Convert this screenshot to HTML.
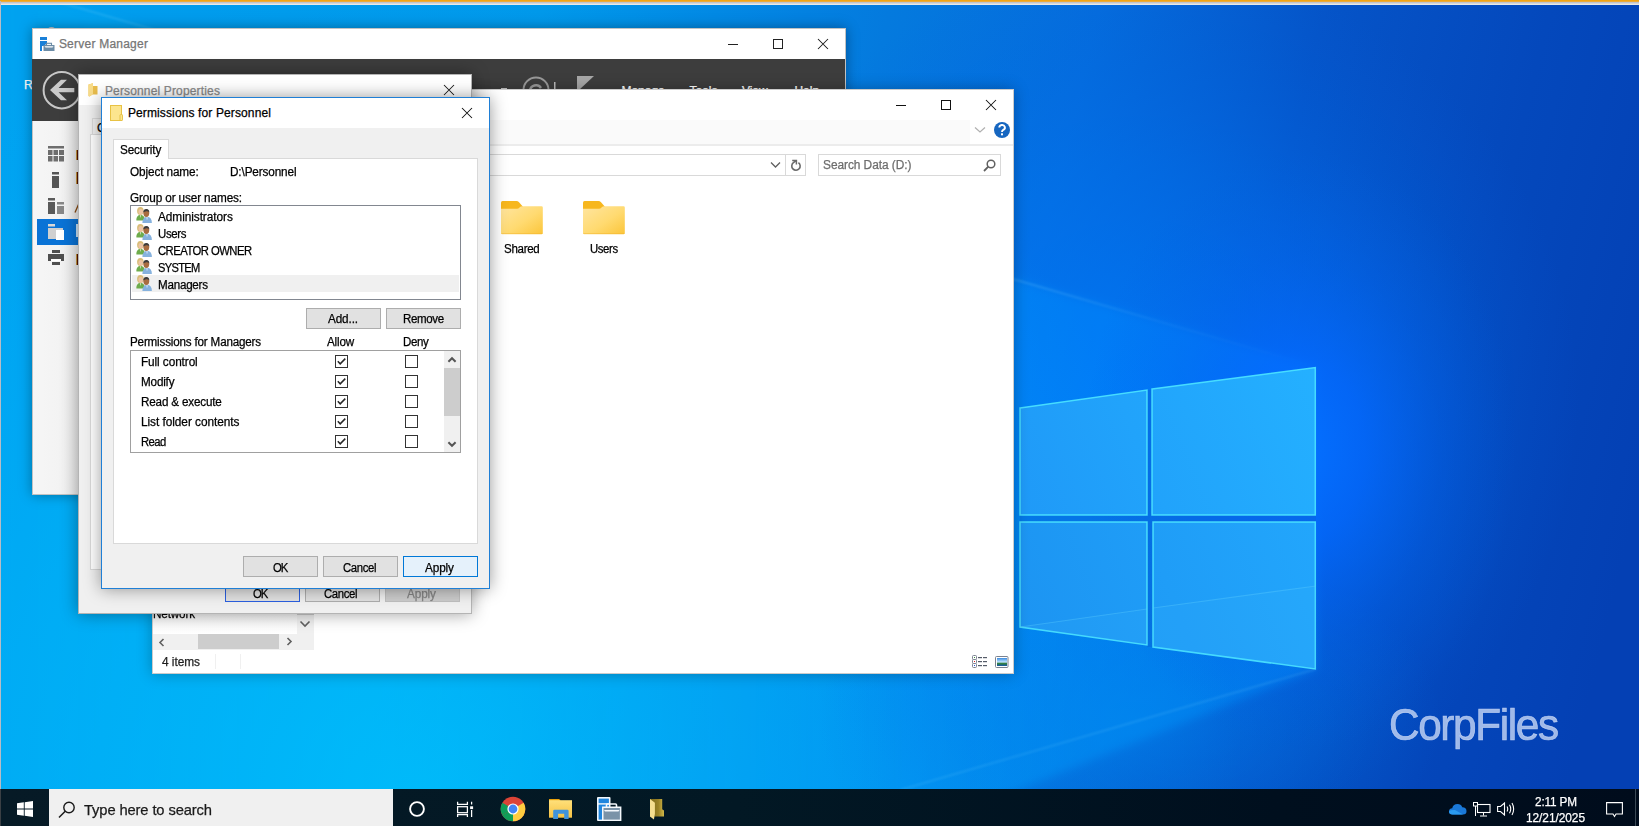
<!DOCTYPE html>
<html><head><meta charset="utf-8"><title>Desktop</title>
<style>
html,body{margin:0;padding:0;width:1639px;height:826px;overflow:hidden;background:#0070d0}
.a{position:absolute;display:block}
.t{position:absolute;white-space:nowrap;line-height:1;font-family:"Liberation Sans",sans-serif;-webkit-text-stroke:0.25px currentColor}
</style></head><body>
<svg class="a" style="left:0;top:0" width="1639" height="826" viewBox="0 0 1639 826">
<defs>
<linearGradient id="bg" x1="0" y1="100" x2="1639" y2="500" gradientUnits="userSpaceOnUse">
<stop offset="0" stop-color="#009eee"/>
<stop offset="0.3" stop-color="#0098ea"/>
<stop offset="0.5" stop-color="#047ade"/>
<stop offset="0.62" stop-color="#056cdc"/>
<stop offset="0.75" stop-color="#0554c8"/>
<stop offset="0.88" stop-color="#0448bc"/>
<stop offset="1" stop-color="#0440b4"/>
</linearGradient>
<radialGradient id="glow" cx="1300" cy="450" r="240" gradientUnits="userSpaceOnUse" gradientTransform="translate(1300 450) scale(0.9 1.25) translate(-1300 -450)">
<stop offset="0" stop-color="#0470ff" stop-opacity="1"/>
<stop offset="0.3" stop-color="#0468ff" stop-opacity="0.75"/>
<stop offset="0.65" stop-color="#0462f0" stop-opacity="0.3"/>
<stop offset="1" stop-color="#0460e0" stop-opacity="0"/>
</radialGradient>
<linearGradient id="beam" x1="1316" y1="0" x2="0" y2="0" gradientUnits="userSpaceOnUse">
<stop offset="0" stop-color="#0098ff" stop-opacity="0.65"/>
<stop offset="0.25" stop-color="#00a0ff" stop-opacity="0.5"/>
<stop offset="0.6" stop-color="#00b0ff" stop-opacity="0.25"/>
<stop offset="1" stop-color="#00c0ff" stop-opacity="0.12"/>
</linearGradient>
<linearGradient id="paneT" x1="1020" y1="500" x2="1316" y2="380" gradientUnits="userSpaceOnUse">
<stop offset="0" stop-color="#1f9af8"/>
<stop offset="1" stop-color="#24b0ff"/>
</linearGradient>
<linearGradient id="paneB" x1="1020" y1="640" x2="1316" y2="530" gradientUnits="userSpaceOnUse">
<stop offset="0" stop-color="#1c94f2"/>
<stop offset="1" stop-color="#22a6fc"/>
</linearGradient>
<radialGradient id="cy" cx="420" cy="800" r="820" gradientUnits="userSpaceOnUse">
<stop offset="0" stop-color="#00c8ff" stop-opacity="0.7"/>
<stop offset="0.5" stop-color="#00c0ff" stop-opacity="0.38"/>
<stop offset="1" stop-color="#00b0ff" stop-opacity="0"/>
</radialGradient>
<radialGradient id="glow2" cx="1140" cy="400" r="440" gradientUnits="userSpaceOnUse">
<stop offset="0" stop-color="#007cfc" stop-opacity="0.85"/>
<stop offset="0.55" stop-color="#0074f4" stop-opacity="0.38"/>
<stop offset="1" stop-color="#0060e0" stop-opacity="0"/>
</radialGradient>
<radialGradient id="floorg" cx="1130" cy="720" r="260" gradientUnits="userSpaceOnUse" gradientTransform="translate(1130 720) scale(1.2 0.7) translate(-1130 -720)">
<stop offset="0" stop-color="#0088f0" stop-opacity="0.55"/>
<stop offset="0.6" stop-color="#0080ec" stop-opacity="0.25"/>
<stop offset="1" stop-color="#0078e8" stop-opacity="0"/>
</radialGradient>
<linearGradient id="edgeg" x1="1316" y1="367" x2="0" y2="-15" gradientUnits="userSpaceOnUse">
<stop offset="0" stop-color="#7fd8ff" stop-opacity="0"/>
<stop offset="0.12" stop-color="#7fd8ff" stop-opacity="0.1"/>
<stop offset="0.25" stop-color="#7fd8ff" stop-opacity="0.35"/>
<stop offset="1" stop-color="#7fd8ff" stop-opacity="0.25"/>
</linearGradient>
<filter id="bl" x="-10%" y="-10%" width="120%" height="120%"><feGaussianBlur stdDeviation="5"/></filter>
<filter id="bl2"><feGaussianBlur stdDeviation="1.2"/></filter>
</defs>
<rect width="1639" height="826" fill="url(#bg)"/>
<polygon points="1316,367 -20,-20 -20,846 880,846 1316,669" fill="url(#beam)" filter="url(#bl)"/>
<rect width="1639" height="826" fill="url(#glow2)"/>
<rect width="1639" height="826" fill="url(#cy)"/>
<rect width="1639" height="826" fill="url(#floorg)"/>
<rect width="1639" height="826" fill="url(#glow)"/>
<path d="M1316 367 L0 -15" stroke="url(#edgeg)" stroke-width="1.5" filter="url(#bl2)"/>
<path d="M1316 669 L900 790" stroke="#7fd8ff" stroke-opacity="0.2" stroke-width="1.5" filter="url(#bl2)"/>
<path d="M1020 515 H1316 V522 H1020 Z M1147 390 H1153 V647 H1147 Z" fill="#0a62d4" opacity="0.4"/>
<g stroke="#50eaff" stroke-width="1.5" stroke-opacity="0.85">
<polygon points="1020,408 1147,390 1147,515 1020,515" fill="url(#paneT)"/>
<polygon points="1152,389 1315.3,367.5 1315.3,515 1152,515" fill="url(#paneT)"/>
<polygon points="1020,522 1147,522 1147,645 1020,627" fill="url(#paneB)"/>
<polygon points="1153,522 1315.3,522 1315.3,669 1153,647" fill="url(#paneB)"/>
</g>
<path d="M1020 627 L1147 609 L1147 645 Z M1153 608 L1316 586 L1316 669 L1153 647 Z" fill="#40c0ff" opacity="0.12"/>
<path d="M1020 627 L1147 609 M1153 608 L1316 586" stroke="#60d0ff" stroke-opacity="0.35" stroke-width="1.2"/>
</svg>
<div class="a" style="left:0px;top:0px;width:1639px;height:2px;background:linear-gradient(#f5a000,#e8b050)"></div>
<div class="a" style="left:0px;top:2px;width:1639px;height:3px;background:linear-gradient(#b8bcc6,#f4f2ec)"></div>
<div class="a" style="left:0px;top:1px;width:1px;height:825px;background:#b8bcc6"></div>
<div class="t" style="left:23.90px;top:78.84px;font-size:12px;color:#ffffff;">R</div>
<div class="a" style="left:48px;top:27px;width:7px;height:3px;background:#b4c4d0;border-radius:3px 3px 0 0"></div>
<div class="a" style="left:32px;top:28px;width:814px;height:467px;background:#ffffff;box-shadow:0 0 12px rgba(0,0,0,0.35);border:1px solid rgba(120,120,120,0.45);box-sizing:border-box"></div>
<svg class="a" style="left:39px;top:36px;" width="16" height="16" viewBox="0 0 16 16"><rect x="1" y="1" width="7" height="3" fill="#1a80d8"/><path d="M1 5 H8 V7 L5 10 L3 10 L3 15 H1 Z" fill="#1a80d8"/><rect x="4.5" y="9" width="11" height="6" fill="#6c8ca6"/><rect x="7.5" y="7.3" width="5" height="2.2" fill="none" stroke="#6c8ca6" stroke-width="1.1"/><path d="M5.5 10.2 H14.5 L13.5 11.6 H6.5 Z" fill="#ffffff"/></svg>
<div class="t" style="left:58.90px;top:38.34px;font-size:12px;color:#767676;letter-spacing:0.228px;">Server Manager</div>
<div class="a" style="left:728px;top:44px;width:10px;height:1px;background:#222"></div>
<div class="a" style="left:773px;top:39px;width:10px;height:10px;border:1px solid #222;box-sizing:border-box"></div>
<svg class="a" style="left:817px;top:38px;" width="12" height="12" viewBox="0 0 12 12"><path d="M1 1 L11 11 M11 1 L1 11" stroke="#1a1a1a" stroke-width="1.05"/></svg>
<div class="a" style="left:32px;top:59px;width:813px;height:62px;background:#3d3d3d"></div>
<svg class="a" style="left:41px;top:70px;" width="40" height="40" viewBox="0 0 40 40"><circle cx="20.8" cy="20.2" r="18.2" fill="none" stroke="#c8c8c8" stroke-width="2"/><path d="M9 20 L20 9.8 H26 L17.6 17.9 H33.3 V22.3 H17.6 L26 30.3 H20 Z" fill="#cbcbcb"/></svg>
<svg class="a" style="left:498px;top:74px;" width="100" height="20" viewBox="0 0 100 20"><rect x="3" y="14" width="6" height="1.6" fill="#c8c8c8"/><circle cx="38" cy="16" r="12.5" fill="none" stroke="#9a9a9a" stroke-width="2"/><path d="M32 17 a6 6 0 0 1 11 -3" stroke="#9a9a9a" stroke-width="2.4" fill="none"/><rect x="56" y="8" width="1.5" height="12" fill="#bbb"/><path d="M79 2 L96 2 L81 16 Z" fill="#a8a8a8"/><rect x="79" y="2" width="2" height="18" fill="#a8a8a8"/></svg>
<div class="t" style="left:621.40px;top:84.84px;font-size:12px;color:#ffffff;">Manage</div>
<div class="t" style="left:689.40px;top:84.84px;font-size:12px;color:#ffffff;">Tools</div>
<div class="t" style="left:741.90px;top:84.84px;font-size:12px;color:#ffffff;">View</div>
<div class="t" style="left:794.40px;top:84.84px;font-size:12px;color:#ffffff;">Help</div>
<div class="a" style="left:33px;top:121px;width:46px;height:373px;background:linear-gradient(90deg,#f6f6f6 0%,#f3f3f3 60%,#ececec 100%)"></div>
<div class="a" style="left:37px;top:219px;width:42px;height:26px;background:#0a73d6"></div>
<svg class="a" style="left:48px;top:146px;" width="18" height="120" viewBox="0 0 18 120"><g fill="#6e6e6e"><rect x="0" y="0" width="16" height="2.5"/><rect x="0" y="4" width="4.5" height="5"/><rect x="5.5" y="4" width="4.5" height="5"/><rect x="11" y="4" width="5" height="5"/><rect x="0" y="10" width="4.5" height="5.5"/><rect x="5.5" y="10" width="4.5" height="5.5"/><rect x="11" y="10" width="5" height="5.5"/></g><g fill="#555"><rect x="4" y="26" width="7" height="2.5"/><rect x="4" y="30" width="7" height="12"/></g><g fill="#5a5a5a"><rect x="0" y="52" width="7" height="2.5"/><rect x="0" y="56" width="7" height="12"/><rect x="9" y="56" width="7" height="2.5" fill="#888"/><rect x="9" y="60" width="7" height="8" fill="#888"/></g><g><rect x="0" y="78" width="7" height="2.5" fill="#d8d8d8"/><rect x="0" y="82" width="15" height="11" fill="#d0d0d0"/><rect x="8" y="84" width="8" height="10" fill="#ffffff"/></g><g fill="#505050"><rect x="4" y="104" width="8" height="3"/><rect x="0" y="108" width="16" height="7"/><rect x="3" y="113" width="10" height="2" fill="#fff"/><rect x="4" y="116" width="8" height="3"/></g></svg>
<div class="a" style="left:76px;top:150px;width:2px;height:10px;background:linear-gradient(90deg,#c89a40 0,#c89a40 35%,#5a1400 35%,#5a1400 100%)"></div>
<div class="a" style="left:76px;top:172px;width:2px;height:12px;background:linear-gradient(90deg,#c89a40 0,#c89a40 35%,#5a1400 35%,#5a1400 100%)"></div>
<div class="a" style="left:76px;top:254px;width:2px;height:11px;background:linear-gradient(90deg,#c89a40 0,#c89a40 35%,#5a1400 35%,#5a1400 100%)"></div>
<svg class="a" style="left:74px;top:204px;" width="5" height="9" viewBox="0 0 5 9"><path d="M4.5 0.5 L1 8.5" stroke="#8a4a10" stroke-width="1.3"/></svg>
<div class="a" style="left:76px;top:224px;width:2px;height:13px;background:#cfe6f8"></div>
<div class="a" style="left:152px;top:89px;width:862px;height:585px;background:#ffffff;box-shadow:0 0 14px rgba(0,0,0,0.28);border:1px solid rgba(140,140,140,0.45);box-sizing:border-box"></div>
<div class="a" style="left:896px;top:105px;width:10px;height:1px;background:#111"></div>
<div class="a" style="left:941px;top:100px;width:10px;height:10px;border:1px solid #111;box-sizing:border-box"></div>
<svg class="a" style="left:985px;top:99px;" width="12" height="12" viewBox="0 0 12 12"><path d="M1 1 L11 11 M11 1 L1 11" stroke="#111" stroke-width="1.05"/></svg>
<div class="a" style="left:152px;top:120px;width:818px;height:24px;background:#fafafa"></div>
<div class="a" style="left:153px;top:144px;width:860px;height:2px;background:#ececec"></div>
<svg class="a" style="left:974px;top:126px;" width="12" height="8" viewBox="0 0 12 8"><path d="M1 1.5 L6 6 L11 1.5" stroke="#b0b0b0" stroke-width="1.2" fill="none"/></svg>
<svg class="a" style="left:993px;top:121px;" width="18" height="18" viewBox="0 0 18 18"><circle cx="9" cy="9" r="8" fill="#1666c0"/><path d="M6.3 6.6 a2.8 2.6 0 1 1 4 2.3 c-1 .6 -1.3 1 -1.3 2" stroke="#fff" stroke-width="1.9" fill="none"/><rect x="8" y="12.3" width="2" height="2" fill="#fff"/></svg>
<div class="a" style="left:300px;top:154px;width:506px;height:22px;border:1px solid #d9d9d9;box-sizing:border-box;background:#fff"></div>
<div class="a" style="left:785px;top:155px;width:1px;height:20px;background:#d9d9d9"></div>
<svg class="a" style="left:770px;top:161px;" width="12" height="8" viewBox="0 0 12 8"><path d="M1 1.5 L5.5 6 L10 1.5" stroke="#606060" stroke-width="1.3" fill="none"/></svg>
<svg class="a" style="left:789px;top:158px;" width="14" height="14" viewBox="0 0 14 14"><path d="M9.4 4.6 A4.2 4.2 0 1 1 4.4 4.7 L7.2 2.6" stroke="#6a6a6a" stroke-width="1.6" fill="none"/><path d="M3.2 2.4 H7.4 V6.6" stroke="#6a6a6a" stroke-width="1.5" fill="none"/></svg>
<div class="a" style="left:818px;top:154px;width:183px;height:22px;border:1px solid #d9d9d9;box-sizing:border-box;background:#fff"></div>
<div class="t" style="left:822.90px;top:159.34px;font-size:12px;color:#6d6d6d;letter-spacing:-0.054px;transform:scaleX(0.9910);transform-origin:0 0;">Search Data (D:)</div>
<svg class="a" style="left:983px;top:159px;" width="13" height="13" viewBox="0 0 13 13"><circle cx="8" cy="5" r="3.8" fill="none" stroke="#606060" stroke-width="1.5"/><path d="M5.3 7.7 L1 12" stroke="#606060" stroke-width="1.8"/></svg>
<svg class="a" style="left:501px;top:201px;" width="43" height="35" viewBox="0 0 43 35"><defs><linearGradient id="fg501" x1="0" y1="0" x2="1" y2="1"><stop offset="0" stop-color="#ffe5a0"/><stop offset="0.55" stop-color="#ffda70"/><stop offset="1" stop-color="#fbc53a"/></linearGradient></defs><path d="M1.5 0 H15.5 Q16.8 0 17.8 1 L21.5 5.2 V10 H0 V1.5 Q0 0 1.5 0 Z" fill="#f7b71e"/><path d="M0 7.7 H16 Q17.5 7.7 18.5 6.5 L19.3 5.7 Q19.9 5.2 21 5.2 H40.5 Q41.8 5.2 41.8 6.5 V32 Q41.8 33.3 40.5 33.3 H1.3 Q0 33.3 0 32 Z" fill="url(#fg501)"/><path d="M0.3 32.4 H41.5" stroke="#f2b42c" stroke-width="0.8" opacity="0.6"/></svg>
<svg class="a" style="left:583px;top:201px;" width="43" height="35" viewBox="0 0 43 35"><defs><linearGradient id="fg583" x1="0" y1="0" x2="1" y2="1"><stop offset="0" stop-color="#ffe5a0"/><stop offset="0.55" stop-color="#ffda70"/><stop offset="1" stop-color="#fbc53a"/></linearGradient></defs><path d="M1.5 0 H15.5 Q16.8 0 17.8 1 L21.5 5.2 V10 H0 V1.5 Q0 0 1.5 0 Z" fill="#f7b71e"/><path d="M0 7.7 H16 Q17.5 7.7 18.5 6.5 L19.3 5.7 Q19.9 5.2 21 5.2 H40.5 Q41.8 5.2 41.8 6.5 V32 Q41.8 33.3 40.5 33.3 H1.3 Q0 33.3 0 32 Z" fill="url(#fg583)"/><path d="M0.3 32.4 H41.5" stroke="#f2b42c" stroke-width="0.8" opacity="0.6"/></svg>
<div class="t" style="left:504.40px;top:243.34px;font-size:12px;color:#000;letter-spacing:-0.299px;transform:scaleX(0.9614);transform-origin:0 0;">Shared</div>
<div class="t" style="left:590.20px;top:243.34px;font-size:12px;color:#000;letter-spacing:-0.418px;transform:scaleX(0.9467);transform-origin:0 0;">Users</div>
<div class="a" style="left:153px;top:613px;width:144px;height:20px;background:linear-gradient(#f4f4f4,#ffffff)"></div>
<div class="t" style="left:152.80px;top:607.84px;font-size:12px;color:#000;letter-spacing:-0.168px;transform:scaleX(0.9771);transform-origin:0 0;">Network</div>
<div class="a" style="left:297px;top:613px;width:17px;height:37px;background:#f0f0f0"></div>
<div class="a" style="left:297px;top:613px;width:17px;height:2px;background:#c8c8c8"></div>
<svg class="a" style="left:299px;top:620px;" width="12" height="8" viewBox="0 0 12 8"><path d="M1.5 1.5 L6 6 L10.5 1.5" stroke="#606060" stroke-width="1.6" fill="none"/></svg>
<div class="a" style="left:153px;top:634px;width:144px;height:16px;background:#f0f0f0"></div>
<div class="a" style="left:198px;top:634px;width:81px;height:15px;background:#cdcdcd"></div>
<svg class="a" style="left:157px;top:637px;" width="10" height="10" viewBox="0 0 10 10"><path d="M6.5 2 L3 5.5 L6.5 9" stroke="#606060" stroke-width="1.6" fill="none"/></svg>
<svg class="a" style="left:284px;top:636px;" width="10" height="10" viewBox="0 0 10 10"><path d="M3.5 2 L7 5.5 L3.5 9" stroke="#606060" stroke-width="1.6" fill="none"/></svg>
<div class="t" style="left:162.40px;top:656.34px;font-size:12px;color:#1e1e1e;letter-spacing:-0.056px;transform:scaleX(0.9913);transform-origin:0 0;">4 items</div>
<div class="a" style="left:215px;top:654px;width:1px;height:15px;background:#f0f0f0"></div>
<div class="a" style="left:240px;top:654px;width:1px;height:15px;background:#f0f0f0"></div>
<svg class="a" style="left:972px;top:655px;" width="16" height="13" viewBox="0 0 16 13"><g fill="#fff" stroke="#7a8290" stroke-width="1"><rect x="0.5" y="0.5" width="4" height="4" rx="1"/><rect x="0.5" y="4.5" width="4" height="4" rx="1"/><rect x="0.5" y="8.5" width="4" height="4" rx="1"/></g><g fill="#555c68"><rect x="6" y="2" width="4" height="1.2"/><rect x="11" y="2" width="4" height="1.2"/><rect x="6" y="6" width="4" height="1.2"/><rect x="11" y="6" width="4" height="1.2"/><rect x="6" y="10" width="4" height="1.2"/><rect x="11" y="10" width="4" height="1.2"/></g><rect x="2" y="2" width="1" height="1" fill="#3a8a3a"/><rect x="2" y="6" width="1" height="1" fill="#e02020"/><rect x="2" y="10" width="1" height="1" fill="#2050e0"/></svg>
<svg class="a" style="left:995px;top:656px;" width="14" height="12" viewBox="0 0 14 12"><defs><linearGradient id="pic" x1="0" y1="0" x2="0" y2="1"><stop offset="0" stop-color="#3a8ae0"/><stop offset="0.5" stop-color="#bfe4ff"/><stop offset="0.7" stop-color="#2a7a3a"/><stop offset="1" stop-color="#1a5ab0"/></linearGradient></defs><rect x="0.5" y="0.5" width="12.5" height="11" rx="1" fill="#fff" stroke="#7a8290"/><rect x="2" y="2" width="10" height="8" fill="url(#pic)"/></svg>
<div class="a" style="left:78px;top:74px;width:394px;height:540px;background:#f0f0f0;box-shadow:0 0 16px rgba(0,0,0,0.38);border:1px solid rgba(140,140,140,0.6);box-sizing:border-box"></div>
<div class="a" style="left:79px;top:75px;width:392px;height:30px;background:#ffffff"></div>
<svg class="a" style="left:88px;top:83px;" width="11" height="14" viewBox="0 0 11 14"><path d="M0.5 1.5 L5 0.3 V3 H9.5 V11.5 H4 L1.5 13.5 L0.5 13 Z" fill="#e9bd4c"/><path d="M0.5 1.5 L5 0.3 V11.5 L1.5 13.5 L0.5 13 Z" fill="#f8dc8a"/></svg>
<div class="t" style="left:104.90px;top:84.84px;font-size:12px;color:#8a8a8a;letter-spacing:0.155px;">Personnel Properties</div>
<svg class="a" style="left:443px;top:84px;" width="12" height="12" viewBox="0 0 12 12"><path d="M1 1 L11 11 M11 1 L1 11" stroke="#1a1a1a" stroke-width="1.05"/></svg>
<div class="a" style="left:92px;top:118px;width:12px;height:17px;background:#f0f0f0;border:1px solid #d9d9d9;border-bottom:none;box-sizing:border-box"></div>
<div class="a" style="left:90px;top:134px;width:380px;height:1px;background:#d9d9d9"></div>
<div class="t" style="left:96.90px;top:121.84px;font-size:12px;color:#000;">General</div>
<div class="a" style="left:90px;top:135px;width:12px;height:434px;background:#ffffff;border-left:1px solid #d9d9d9;box-sizing:border-box"></div>
<div class="a" style="left:90px;top:569px;width:380px;height:1px;background:#d9d9d9"></div>
<div class="a" style="left:225px;top:582px;width:75px;height:20px;background:#e1e1e1;border:1px solid #2a5fe0;box-sizing:border-box"></div>
<div class="t" style="left:253.40px;top:587.64px;font-size:12px;color:#000;letter-spacing:-1.014px;transform:scaleX(0.9415);transform-origin:0 0;">OK</div>
<div class="a" style="left:305px;top:582px;width:75px;height:20px;background:#e1e1e1;border:1px solid #adadad;box-sizing:border-box"></div>
<div class="t" style="left:324.40px;top:587.64px;font-size:12px;color:#000;letter-spacing:-0.406px;transform:scaleX(0.9457);transform-origin:0 0;">Cancel</div>
<div class="a" style="left:385px;top:582px;width:75px;height:20px;background:#cccccc;border:1px solid #bfbfbf;box-sizing:border-box"></div>
<div class="t" style="left:407.40px;top:587.64px;font-size:12px;color:#838383;letter-spacing:-0.139px;transform:scaleX(0.9814);transform-origin:0 0;">Apply</div>
<div class="a" style="left:101px;top:97px;width:389px;height:492px;background:#f0f0f0;border:1px solid #1f7fd6;box-sizing:border-box;box-shadow:0 0 16px rgba(0,0,0,0.4)"></div>
<div class="a" style="left:102px;top:98px;width:387px;height:30px;background:#ffffff"></div>
<svg class="a" style="left:110px;top:105px;" width="13" height="16" viewBox="0 0 13 16"><rect x="0.5" y="0.5" width="11" height="15" fill="#fce58e" stroke="#e8c244"/><rect x="10" y="9.6" width="2.5" height="5.9" rx="0.6" fill="#fce58e" stroke="#e4be40" stroke-width="0.9"/></svg>
<div class="t" style="left:127.90px;top:107.34px;font-size:12px;color:#000;letter-spacing:0.123px;">Permissions for Personnel</div>
<svg class="a" style="left:461px;top:107px;" width="12" height="12" viewBox="0 0 12 12"><path d="M1 1 L11 11 M11 1 L1 11" stroke="#111" stroke-width="1.05"/></svg>
<div class="a" style="left:113px;top:158px;width:365px;height:386px;background:#ffffff;border:1px solid #d9d9d9;box-sizing:border-box"></div>
<div class="a" style="left:113px;top:139px;width:56px;height:20px;background:#ffffff;border:1px solid #d9d9d9;border-bottom:none;box-sizing:border-box"></div>
<div class="t" style="left:120.40px;top:143.84px;font-size:12px;color:#000;letter-spacing:-0.153px;transform:scaleX(0.9753);transform-origin:0 0;">Security</div>
<div class="t" style="left:130.20px;top:165.54px;font-size:12px;color:#000;letter-spacing:-0.120px;transform:scaleX(0.9815);transform-origin:0 0;">Object name:</div>
<div class="t" style="left:229.70px;top:165.54px;font-size:12px;color:#000;letter-spacing:-0.130px;transform:scaleX(0.9794);transform-origin:0 0;">D:\Personnel</div>
<div class="t" style="left:130.20px;top:192.44px;font-size:12px;color:#000;letter-spacing:-0.123px;transform:scaleX(0.9799);transform-origin:0 0;">Group or user names:</div>
<div class="a" style="left:130px;top:205px;width:331px;height:95px;background:#ffffff;border:1px solid #828790;box-sizing:border-box"></div>
<div class="a" style="left:132px;top:275px;width:327px;height:17px;background:#f0f0f0"></div>
<svg class="a" style="left:136px;top:207px;" width="17" height="16" viewBox="0 0 17 16"><g><path d="M0.3 13.3 Q0.3 8.3 4.3 7.8 Q8.6 8.2 8.8 12.5 L8.8 13.6 L0.6 13.6 Z" fill="#6eac4c"/><path d="M3.8 8.3 L4.4 11 L5 8.3 Z" fill="#e8f0e0"/><ellipse cx="4.4" cy="4" rx="3.3" ry="3.9" fill="#d9bd78"/><ellipse cx="4.8" cy="4.7" rx="2.3" ry="2.8" fill="#ecc4a4"/><path d="M6.4 16 Q6.4 10.2 11.2 9.7 Q15.9 10.2 15.9 16 Z" fill="#86b2de"/><path d="M10.4 10.2 L11 13.2 L11.7 10.2 Z" fill="#f4f8ff"/><ellipse cx="10.3" cy="6.2" rx="2.9" ry="3.7" fill="#a86c40"/><path d="M7.3 5.4 Q7.3 2 10.4 2 Q13.4 2.1 13.3 5.6 Q12.3 3.9 10.3 4.2 Q8.6 4.4 7.3 5.4 Z" fill="#3c3c3c"/></g></svg>
<div class="t" style="left:157.90px;top:210.84px;font-size:12px;color:#000;letter-spacing:-0.073px;transform:scaleX(0.9877);transform-origin:0 0;">Administrators</div>
<svg class="a" style="left:136px;top:224px;" width="17" height="16" viewBox="0 0 17 16"><g><path d="M0.3 13.3 Q0.3 8.3 4.3 7.8 Q8.6 8.2 8.8 12.5 L8.8 13.6 L0.6 13.6 Z" fill="#6eac4c"/><path d="M3.8 8.3 L4.4 11 L5 8.3 Z" fill="#e8f0e0"/><ellipse cx="4.4" cy="4" rx="3.3" ry="3.9" fill="#d9bd78"/><ellipse cx="4.8" cy="4.7" rx="2.3" ry="2.8" fill="#ecc4a4"/><path d="M6.4 16 Q6.4 10.2 11.2 9.7 Q15.9 10.2 15.9 16 Z" fill="#86b2de"/><path d="M10.4 10.2 L11 13.2 L11.7 10.2 Z" fill="#f4f8ff"/><ellipse cx="10.3" cy="6.2" rx="2.9" ry="3.7" fill="#a86c40"/><path d="M7.3 5.4 Q7.3 2 10.4 2 Q13.4 2.1 13.3 5.6 Q12.3 3.9 10.3 4.2 Q8.6 4.4 7.3 5.4 Z" fill="#3c3c3c"/></g></svg>
<div class="t" style="left:157.90px;top:227.84px;font-size:12px;color:#000;letter-spacing:-0.368px;transform:scaleX(0.9530);transform-origin:0 0;">Users</div>
<svg class="a" style="left:136px;top:241px;" width="17" height="16" viewBox="0 0 17 16"><g><path d="M0.3 13.3 Q0.3 8.3 4.3 7.8 Q8.6 8.2 8.8 12.5 L8.8 13.6 L0.6 13.6 Z" fill="#6eac4c"/><path d="M3.8 8.3 L4.4 11 L5 8.3 Z" fill="#e8f0e0"/><ellipse cx="4.4" cy="4" rx="3.3" ry="3.9" fill="#d9bd78"/><ellipse cx="4.8" cy="4.7" rx="2.3" ry="2.8" fill="#ecc4a4"/><path d="M6.4 16 Q6.4 10.2 11.2 9.7 Q15.9 10.2 15.9 16 Z" fill="#86b2de"/><path d="M10.4 10.2 L11 13.2 L11.7 10.2 Z" fill="#f4f8ff"/><ellipse cx="10.3" cy="6.2" rx="2.9" ry="3.7" fill="#a86c40"/><path d="M7.3 5.4 Q7.3 2 10.4 2 Q13.4 2.1 13.3 5.6 Q12.3 3.9 10.3 4.2 Q8.6 4.4 7.3 5.4 Z" fill="#3c3c3c"/></g></svg>
<div class="t" style="left:157.90px;top:244.84px;font-size:12px;color:#000;letter-spacing:-0.550px;transform:scaleX(0.9383);transform-origin:0 0;">CREATOR OWNER</div>
<svg class="a" style="left:136px;top:258px;" width="17" height="16" viewBox="0 0 17 16"><g><path d="M0.3 13.3 Q0.3 8.3 4.3 7.8 Q8.6 8.2 8.8 12.5 L8.8 13.6 L0.6 13.6 Z" fill="#6eac4c"/><path d="M3.8 8.3 L4.4 11 L5 8.3 Z" fill="#e8f0e0"/><ellipse cx="4.4" cy="4" rx="3.3" ry="3.9" fill="#d9bd78"/><ellipse cx="4.8" cy="4.7" rx="2.3" ry="2.8" fill="#ecc4a4"/><path d="M6.4 16 Q6.4 10.2 11.2 9.7 Q15.9 10.2 15.9 16 Z" fill="#86b2de"/><path d="M10.4 10.2 L11 13.2 L11.7 10.2 Z" fill="#f4f8ff"/><ellipse cx="10.3" cy="6.2" rx="2.9" ry="3.7" fill="#a86c40"/><path d="M7.3 5.4 Q7.3 2 10.4 2 Q13.4 2.1 13.3 5.6 Q12.3 3.9 10.3 4.2 Q8.6 4.4 7.3 5.4 Z" fill="#3c3c3c"/></g></svg>
<div class="t" style="left:157.90px;top:261.84px;font-size:12px;color:#000;letter-spacing:-0.743px;transform:scaleX(0.9247);transform-origin:0 0;">SYSTEM</div>
<svg class="a" style="left:136px;top:275px;" width="17" height="16" viewBox="0 0 17 16"><g><path d="M0.3 13.3 Q0.3 8.3 4.3 7.8 Q8.6 8.2 8.8 12.5 L8.8 13.6 L0.6 13.6 Z" fill="#6eac4c"/><path d="M3.8 8.3 L4.4 11 L5 8.3 Z" fill="#e8f0e0"/><ellipse cx="4.4" cy="4" rx="3.3" ry="3.9" fill="#d9bd78"/><ellipse cx="4.8" cy="4.7" rx="2.3" ry="2.8" fill="#ecc4a4"/><path d="M6.4 16 Q6.4 10.2 11.2 9.7 Q15.9 10.2 15.9 16 Z" fill="#86b2de"/><path d="M10.4 10.2 L11 13.2 L11.7 10.2 Z" fill="#f4f8ff"/><ellipse cx="10.3" cy="6.2" rx="2.9" ry="3.7" fill="#a86c40"/><path d="M7.3 5.4 Q7.3 2 10.4 2 Q13.4 2.1 13.3 5.6 Q12.3 3.9 10.3 4.2 Q8.6 4.4 7.3 5.4 Z" fill="#3c3c3c"/></g></svg>
<div class="t" style="left:157.90px;top:278.84px;font-size:12px;color:#000;letter-spacing:-0.240px;transform:scaleX(0.9685);transform-origin:0 0;">Managers</div>
<div class="a" style="left:306px;top:308px;width:75px;height:21px;background:#e1e1e1;border:1px solid #adadad;box-sizing:border-box"></div>
<div class="t" style="left:327.60px;top:313.34px;font-size:12px;color:#000;letter-spacing:-0.133px;transform:scaleX(0.9788);transform-origin:0 0;">Add...</div>
<div class="a" style="left:386px;top:308px;width:75px;height:21px;background:#e1e1e1;border:1px solid #adadad;box-sizing:border-box"></div>
<div class="t" style="left:403.00px;top:313.34px;font-size:12px;color:#000;letter-spacing:-0.359px;transform:scaleX(0.9599);transform-origin:0 0;">Remove</div>
<div class="t" style="left:130.20px;top:335.54px;font-size:12px;color:#000;letter-spacing:-0.182px;transform:scaleX(0.9700);transform-origin:0 0;">Permissions for Managers</div>
<div class="t" style="left:326.80px;top:335.54px;font-size:12px;color:#000;letter-spacing:-0.198px;transform:scaleX(0.9723);transform-origin:0 0;">Allow</div>
<div class="t" style="left:403.00px;top:335.54px;font-size:12px;color:#000;letter-spacing:-0.386px;transform:scaleX(0.9587);transform-origin:0 0;">Deny</div>
<div class="a" style="left:130px;top:350px;width:331px;height:103px;background:#ffffff;border:1px solid #a0a0a0;box-sizing:border-box"></div>
<div class="t" style="left:141.10px;top:355.84px;font-size:12px;color:#000;letter-spacing:-0.090px;transform:scaleX(0.9831);transform-origin:0 0;">Full control</div>
<svg class="a" style="left:335px;top:355px;" width="13" height="13" viewBox="0 0 13 13"><rect x="0.5" y="0.5" width="12" height="12" fill="#fff" stroke="#333"/><path d="M2.8 6.3 L5.2 8.8 L10.3 3.6" stroke="#262626" stroke-width="1.5" fill="none"/></svg>
<svg class="a" style="left:405px;top:355px;" width="13" height="13" viewBox="0 0 13 13"><rect x="0.5" y="0.5" width="12" height="12" fill="#fff" stroke="#333"/></svg>
<div class="t" style="left:141.10px;top:375.84px;font-size:12px;color:#000;letter-spacing:-0.184px;transform:scaleX(0.9739);transform-origin:0 0;">Modify</div>
<svg class="a" style="left:335px;top:375px;" width="13" height="13" viewBox="0 0 13 13"><rect x="0.5" y="0.5" width="12" height="12" fill="#fff" stroke="#333"/><path d="M2.8 6.3 L5.2 8.8 L10.3 3.6" stroke="#262626" stroke-width="1.5" fill="none"/></svg>
<svg class="a" style="left:405px;top:375px;" width="13" height="13" viewBox="0 0 13 13"><rect x="0.5" y="0.5" width="12" height="12" fill="#fff" stroke="#333"/></svg>
<div class="t" style="left:141.10px;top:395.84px;font-size:12px;color:#000;letter-spacing:-0.179px;transform:scaleX(0.9727);transform-origin:0 0;">Read &amp; execute</div>
<svg class="a" style="left:335px;top:395px;" width="13" height="13" viewBox="0 0 13 13"><rect x="0.5" y="0.5" width="12" height="12" fill="#fff" stroke="#333"/><path d="M2.8 6.3 L5.2 8.8 L10.3 3.6" stroke="#262626" stroke-width="1.5" fill="none"/></svg>
<svg class="a" style="left:405px;top:395px;" width="13" height="13" viewBox="0 0 13 13"><rect x="0.5" y="0.5" width="12" height="12" fill="#fff" stroke="#333"/></svg>
<div class="t" style="left:141.10px;top:415.84px;font-size:12px;color:#000;letter-spacing:-0.060px;transform:scaleX(0.9886);transform-origin:0 0;">List folder contents</div>
<svg class="a" style="left:335px;top:415px;" width="13" height="13" viewBox="0 0 13 13"><rect x="0.5" y="0.5" width="12" height="12" fill="#fff" stroke="#333"/><path d="M2.8 6.3 L5.2 8.8 L10.3 3.6" stroke="#262626" stroke-width="1.5" fill="none"/></svg>
<svg class="a" style="left:405px;top:415px;" width="13" height="13" viewBox="0 0 13 13"><rect x="0.5" y="0.5" width="12" height="12" fill="#fff" stroke="#333"/></svg>
<div class="t" style="left:141.10px;top:435.84px;font-size:12px;color:#000;letter-spacing:-0.581px;transform:scaleX(0.9392);transform-origin:0 0;">Read</div>
<svg class="a" style="left:335px;top:435px;" width="13" height="13" viewBox="0 0 13 13"><rect x="0.5" y="0.5" width="12" height="12" fill="#fff" stroke="#333"/><path d="M2.8 6.3 L5.2 8.8 L10.3 3.6" stroke="#262626" stroke-width="1.5" fill="none"/></svg>
<svg class="a" style="left:405px;top:435px;" width="13" height="13" viewBox="0 0 13 13"><rect x="0.5" y="0.5" width="12" height="12" fill="#fff" stroke="#333"/></svg>
<div class="a" style="left:444px;top:351px;width:16px;height:101px;background:#f0f0f0"></div>
<div class="a" style="left:444px;top:368px;width:16px;height:48px;background:#cdcdcd"></div>
<svg class="a" style="left:446px;top:356px;" width="12" height="8" viewBox="0 0 12 8"><path d="M2.4 5.8 L6 2.2 L9.6 5.8" stroke="#555" stroke-width="2" fill="none"/></svg>
<svg class="a" style="left:446px;top:440px;" width="12" height="8" viewBox="0 0 12 8"><path d="M2.4 2.2 L6 5.8 L9.6 2.2" stroke="#555" stroke-width="2" fill="none"/></svg>
<div class="a" style="left:243px;top:556px;width:75px;height:21px;background:#e1e1e1;border:1px solid #adadad;box-sizing:border-box"></div>
<div class="t" style="left:272.60px;top:561.84px;font-size:12px;color:#000;letter-spacing:-1.014px;transform:scaleX(0.9415);transform-origin:0 0;">OK</div>
<div class="a" style="left:323px;top:556px;width:75px;height:21px;background:#e1e1e1;border:1px solid #adadad;box-sizing:border-box"></div>
<div class="t" style="left:342.70px;top:561.84px;font-size:12px;color:#000;letter-spacing:-0.406px;transform:scaleX(0.9457);transform-origin:0 0;">Cancel</div>
<div class="a" style="left:403px;top:556px;width:75px;height:21px;background:#e5f1fb;border:1px solid #0078d7;box-sizing:border-box"></div>
<div class="t" style="left:425.40px;top:561.84px;font-size:12px;color:#000;letter-spacing:-0.139px;transform:scaleX(0.9814);transform-origin:0 0;">Apply</div>
<div class="t" style="left:1388.90px;top:701.91px;font-size:45px;color:rgba(200,215,245,0.8);letter-spacing:-1.441px;transform:scaleX(0.9401);transform-origin:0 0;-webkit-text-stroke:0.7px rgba(200,215,245,0.8);">CorpFiles</div>
<div class="a" style="left:0px;top:789px;width:1639px;height:37px;background:linear-gradient(90deg,#061a26 0%,#021824 45%,#000f1e 78%,#000c1c 100%)"></div>
<div class="a" style="left:0px;top:789px;width:1px;height:37px;background:#3a3f44"></div>
<svg class="a" style="left:17px;top:801px;" width="16" height="16" viewBox="0 0 16 16"><path d="M0 2.2 L6.8 1.3 V7.5 H0 Z M7.7 1.2 L16 0 V7.5 H7.7 Z M0 8.4 H6.8 V14.7 L0 13.8 Z M7.7 8.4 H16 V16 L7.7 14.8 Z" fill="#ffffff"/></svg>
<div class="a" style="left:49px;top:789px;width:344px;height:37px;background:#f0f0f0"></div>
<svg class="a" style="left:58px;top:801px;" width="18" height="18" viewBox="0 0 18 18"><circle cx="11" cy="6.5" r="5.2" fill="none" stroke="#1a1a1a" stroke-width="1.4"/><path d="M7.2 10.3 L1 16.5" stroke="#1a1a1a" stroke-width="1.5"/></svg>
<div class="t" style="left:83.90px;top:802.10px;font-size:15px;color:#1a1a1a;letter-spacing:-0.128px;transform:scaleX(0.9826);transform-origin:0 0;">Type here to search</div>
<svg class="a" style="left:408px;top:800px;" width="18" height="18" viewBox="0 0 18 18"><circle cx="9" cy="9" r="6.9" fill="none" stroke="#ffffff" stroke-width="1.9"/></svg>
<svg class="a" style="left:456px;top:801px;" width="18" height="17" viewBox="0 0 18 17"><g fill="none" stroke="#fff" stroke-width="1.25"><path d="M1.6 0.8 V3.4 H11.4 V0.8"/><rect x="1.6" y="5.7" width="9.8" height="6"/><path d="M1.6 16 V13.6 H11.4 V16"/><path d="M15.6 0.8 V3.6 M15.6 9 V16"/></g><rect x="14.1" y="5.3" width="3" height="2.8" fill="#fff"/></svg>
<svg class="a" style="left:500px;top:796px;" width="26" height="26" viewBox="0 0 26 26"><circle cx="13" cy="13" r="12.3" fill="#db4437"/><path d="M13 13 L2.35 19.15 A12.3 12.3 0 0 0 13 25.3 Z" fill="#0f9d58"/><path d="M13 13 L23.65 6.85 A12.3 12.3 0 0 1 13 25.3 Z" fill="#ffcd40"/><path d="M13 13 L2.35 6.85 A12.3 12.3 0 0 0 2.35 19.15 Z" fill="#0f9d58"/><circle cx="13" cy="13" r="5.6" fill="#fff"/><circle cx="13" cy="13" r="4.4" fill="#4285f4"/></svg>
<svg class="a" style="left:549px;top:798px;" width="24" height="21" viewBox="0 0 24 21"><defs><linearGradient id="fe" x1="0" y1="0" x2="0" y2="1"><stop offset="0" stop-color="#ffe07a"/><stop offset="1" stop-color="#f6c244"/></linearGradient></defs><path d="M0 1 H10 L11.3 2 V5 H0 Z" fill="#e9a10c"/><rect x="0" y="2.2" width="23" height="17.5" fill="url(#fe)"/><path d="M4.2 21 V13 Q4.2 11.8 5.4 11.8 H18.4 Q19.6 11.8 19.6 13 V21 H15.2 V15.7 H9.1 V21 Z" fill="#3f93dc"/></svg>
<svg class="a" style="left:596px;top:796px;" width="27" height="26" viewBox="0 0 27 26"><rect x="1" y="1" width="13.5" height="24" rx="1" fill="#f4f8fc"/><rect x="2.6" y="2.6" width="10.3" height="4.6" fill="#1f86de"/><rect x="2.6" y="8.6" width="10.3" height="15" fill="#1f86de"/><path d="M6 10.5 H25.4 V25 H6 Z" fill="#f4f8fc"/><rect x="10.5" y="8" width="10" height="4" rx="1" fill="none" stroke="#f4f8fc" stroke-width="1.6"/><rect x="7.5" y="12" width="16.4" height="11.6" fill="#7a93a8"/><path d="M8 14 H23.5 L22.5 15.6 H9 Z" fill="#f4f8fc"/></svg>
<svg class="a" style="left:649px;top:798px;" width="17" height="23" viewBox="0 0 17 23"><defs><linearGradient id="of" x1="0" y1="0" x2="1" y2="0"><stop offset="0" stop-color="#7c6a1a"/><stop offset="0.6" stop-color="#9a8226"/><stop offset="1" stop-color="#d2b848"/></linearGradient></defs><path d="M1 1 H13.2 V11.3 L15 12.5 V18.5 H1 Z" fill="url(#of)"/><path d="M1 1 L5.9 4.7 V15.7 L4.9 21.6 L1 18.6 Z" fill="#f5de90"/></svg>
<svg class="a" style="left:1449px;top:803px;" width="18" height="12" viewBox="0 0 18 12"><path d="M3.5 11.5 Q0 11.5 0 8.3 Q0 5.5 3.2 5.2 Q4.3 1 8.5 1 Q12 1 13.3 4.3 Q17.5 4.5 17.5 8.3 Q17.5 11.5 14 11.5 Z" fill="#1a78d8"/><path d="M3.5 11.5 Q0 11.5 0 8.3 Q2 6.5 6 7 L14 11.5 Z" fill="#2a9af0"/></svg>
<svg class="a" style="left:1473px;top:802px;" width="18" height="15" viewBox="0 0 18 15"><rect x="4.5" y="2.5" width="12.5" height="8" fill="none" stroke="#fff" stroke-width="1.1"/><rect x="0.5" y="0.5" width="4" height="3.5" fill="none" stroke="#fff" stroke-width="1"/><rect x="2" y="4" width="1" height="10" fill="#fff"/><rect x="10" y="10.5" width="1" height="3" fill="#fff"/><rect x="7" y="13.5" width="7" height="1" fill="#fff"/></svg>
<svg class="a" style="left:1497px;top:802px;" width="18" height="14" viewBox="0 0 18 14"><path d="M0.6 4.5 H3.5 L7.5 1 V13 L3.5 9.5 H0.6 Z" fill="none" stroke="#fff" stroke-width="1.1"/><path d="M10 4.5 Q11.5 7 10 9.5 M12.5 2.8 Q15 7 12.5 11.2 M15 1 Q18.3 7 15 13" fill="none" stroke="#fff" stroke-width="1.1"/></svg>
<div class="t" style="left:1534.70px;top:795.64px;font-size:12px;color:#ffffff;letter-spacing:-0.148px;transform:scaleX(0.9797);transform-origin:0 0;">2:11 PM</div>
<div class="t" style="left:1526.40px;top:811.84px;font-size:12px;color:#ffffff;letter-spacing:-0.057px;transform:scaleX(0.9914);transform-origin:0 0;">12/21/2025</div>
<svg class="a" style="left:1606px;top:802px;" width="18" height="16" viewBox="0 0 18 16"><path d="M0.6 0.6 H16.4 V12 H10 L8.5 14.5 L7 12 H0.6 Z" fill="none" stroke="#fff" stroke-width="1.1"/></svg>
<div class="a" style="left:1635px;top:789px;width:1px;height:37px;background:#3c4a56"></div>
</body></html>
